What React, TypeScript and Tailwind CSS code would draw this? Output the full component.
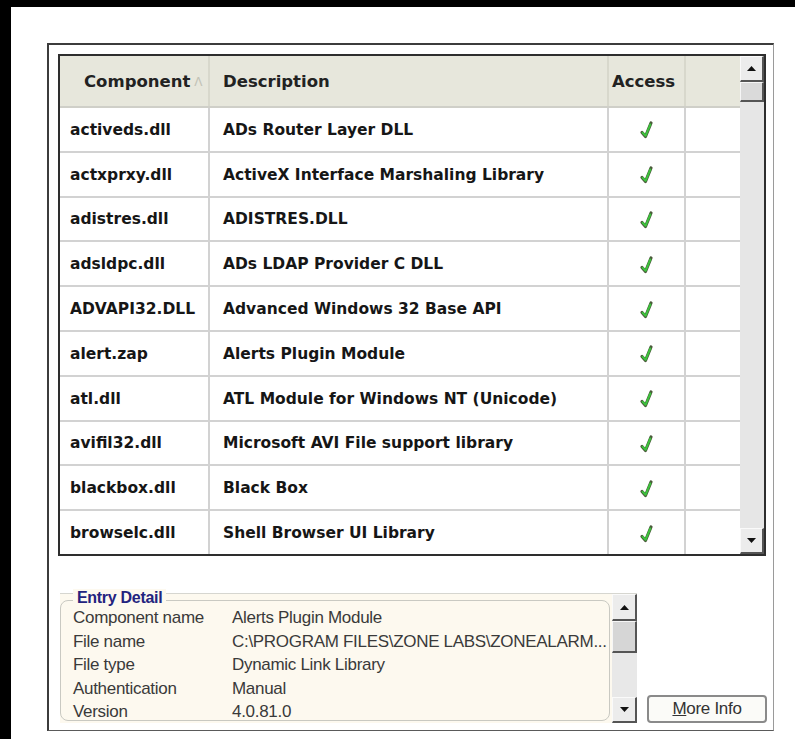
import { ReactNode } from "react";

interface Entry {
  file: string;
  desc: string;
}

const entries: Entry[] = [
  { file: "activeds.dll", desc: "ADs Router Layer DLL" },
  { file: "actxprxy.dll", desc: "ActiveX Interface Marshaling Library" },
  { file: "adistres.dll", desc: "ADISTRES.DLL" },
  { file: "adsldpc.dll", desc: "ADs LDAP Provider C DLL" },
  { file: "ADVAPI32.DLL", desc: "Advanced Windows 32 Base API" },
  { file: "alert.zap", desc: "Alerts Plugin Module" },
  { file: "atl.dll", desc: "ATL Module for Windows NT (Unicode)" },
  { file: "avifil32.dll", desc: "Microsoft AVI File support library" },
  { file: "blackbox.dll", desc: "Black Box" },
  { file: "browselc.dll", desc: "Shell Browser UI Library" },
];

const details: [string, string][] = [
  ["Component name", "Alerts Plugin Module"],
  ["File name", "C:\\PROGRAM FILES\\ZONE LABS\\ZONEALARM..."],
  ["File type", "Dynamic Link Library"],
  ["Authentication", "Manual"],
  ["Version", "4.0.81.0"],
];

const Check = () => (
  <svg width="16" height="20" viewBox="0 0 16 20">
    <path d="M3 12.5 L6.5 16.5 L12 3" fill="none" stroke="#4a5a3a" strokeWidth="3.2" strokeLinecap="round" strokeLinejoin="round" />
    <path d="M3.6 12.8 L6.6 15.8 L11.3 4.5" fill="none" stroke="#3cc23c" strokeWidth="2" strokeLinecap="round" strokeLinejoin="round" />
  </svg>
);

const Arrow = ({ up }: { up?: boolean }) => (
  <svg width="9" height="5" viewBox="0 0 9 5">
    <path d={up ? "M0 5 L4.5 0 L9 5 Z" : "M0 0 L4.5 5 L9 0 Z"} fill="#111" />
  </svg>
);

const ScrollButton = ({ up, className }: { up?: boolean; className: string }) => (
  <div className={`flex items-center justify-center bg-[#ececec] border-t border-l border-t-[#fafafa] border-l-[#fafafa] border-r-2 border-b-2 border-r-[#555] border-b-[#555] ${className}`}>
    <Arrow up={up} />
  </div>
);

const Cell = ({ w, children, className = "" }: { w: string; children?: ReactNode; className?: string }) => (
  <div className={`${w} h-full flex items-center border-r-2 border-[#d2d2d2] whitespace-nowrap ${className}`}>{children}</div>
);

export default function App() {
  return (
    <div className="min-h-[739px] bg-black pl-[11px] pt-[7px]">
      <div className="h-[732px] bg-white pl-[36px] pt-[36px]">
        <div className="w-[727px] h-[688px] border-l-2 border-t-2 border-[#3c3c3c] border-r border-b border-r-[#9a9a9a] border-b-[#5a5a5a] pl-[9px] pt-[9px] flex flex-col">
          {/* component list */}
          <div className="w-[708px] h-[502px] border-2 border-[#2e2e2e] flex bg-white" style={{ fontFamily: '"DejaVu Sans", Verdana, sans-serif' }}>
            <div className="w-[680px] flex flex-col text-[15.5px] font-bold text-[#161616]">
              <div className="h-[52px] shrink-0 flex bg-[#e7e7dc] border-b-2 border-[#cfcfc8] text-[16.5px] text-[#222]">
                <Cell w="w-[150px]" className="pl-[24px] pt-[2px] border-[#d8d8cc]">
                  Component
                  <span className="ml-[4px] font-normal text-[#c2c2b6] text-[12px]">&#923;</span>
                </Cell>
                <Cell w="w-[399px]" className="pl-[13px] pt-[2px] border-[#d8d8cc]">Description</Cell>
                <Cell w="w-[77px]" className="pl-[3px] pt-[2px] border-[#d8d8cc]">Access</Cell>
                <div className="w-[54px]" />
              </div>
              {entries.map((e) => (
                <div key={e.file} className="flex-1 flex border-b-2 border-[#d2d2d2] last:border-b-0">
                  <Cell w="w-[150px]" className="pl-[10px] pt-[2px]">{e.file}</Cell>
                  <Cell w="w-[399px]" className="pl-[13px] pt-[2px]">{e.desc}</Cell>
                  <Cell w="w-[77px]" className="justify-center pt-[2px]"><Check /></Cell>
                  <div className="w-[54px]" />
                </div>
              ))}
            </div>
            <div className="w-[24px] flex flex-col bg-[#e6e6e6]">
              <ScrollButton up className="h-[26px]" />
              <div className="h-[20px] bg-[#dadada] border-t border-l border-[#f6f6f6] border-r-2 border-b-2 border-r-[#555] border-b-[#555]" />
              <div className="flex-1" />
              <ScrollButton className="h-[26px]" />
            </div>
          </div>

          {/* detail pane and button */}
          <div className="mt-[37px] ml-[2px] flex items-end" style={{ fontFamily: '"Liberation Sans", Arial, sans-serif' }}>
            <div className="w-[577px] h-[130px] flex bg-[#fdf9ef] border-t border-[#d6d6d0]">
              <div className="flex-1 pt-[6px] pr-[2px] pb-[2px]">
                <div className="relative h-full border border-[#c9c9c2] rounded-[8px] pl-[12px] pt-[5px]">
                  <span className="absolute -top-[12px] left-[12px] px-[4px] bg-[#fdf9ef] text-[16px] leading-[18px] font-bold text-[#23237e] tracking-[-0.3px]">Entry Detail</span>
                  {details.map(([k, v]) => (
                    <div key={k} className="flex h-[23.5px] items-center text-[17px] text-[#3a3a3a] tracking-[-0.3px] whitespace-nowrap">
                      <span className="w-[159px]">{k}</span>
                      <span>{v}</span>
                    </div>
                  ))}
                </div>
              </div>
              <div className="w-[25px] flex flex-col bg-[#e8e8e8]">
                <ScrollButton up className="h-[27px]" />
                <div className="h-[32px] bg-[#d6d6d6] border-t border-l border-[#f6f6f6] border-r-2 border-b-2 border-r-[#555] border-b-[#555]" />
                <div className="flex-1" />
                <ScrollButton className="h-[26px]" />
              </div>
            </div>
            <button className="ml-[10px] w-[120px] h-[28px] rounded-[4px] border-2 border-[#8a8a8a] bg-[#fbfbf8] text-[17px] text-[#333] tracking-[-0.3px] flex items-center justify-center">
              <span><span className="underline">M</span>ore Info</span>
            </button>
          </div>
        </div>
      </div>
    </div>
  );
}
